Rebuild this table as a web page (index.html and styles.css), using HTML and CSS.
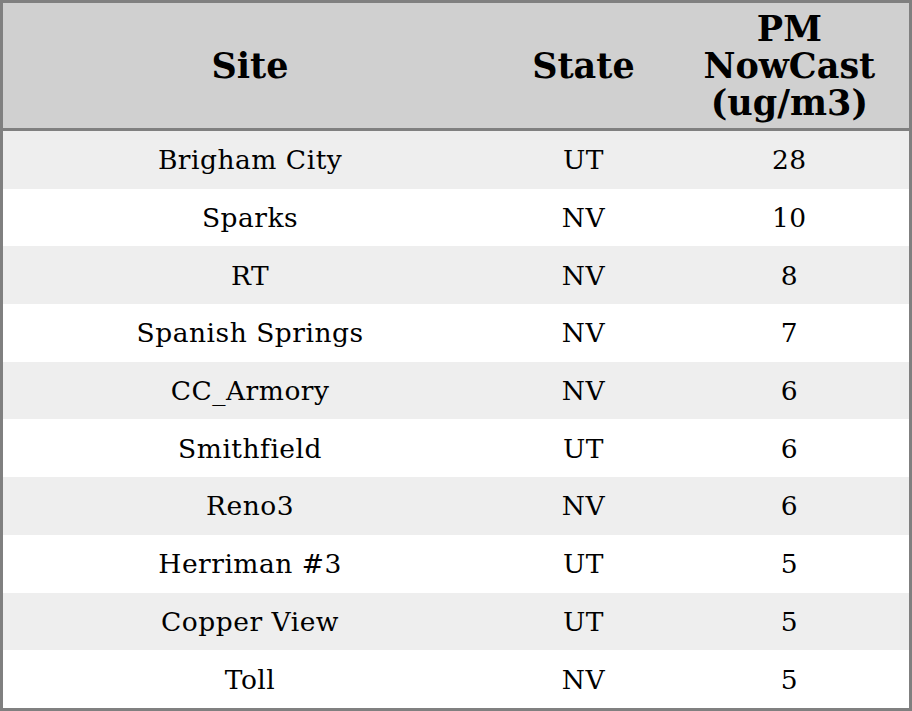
FILE: index.html
```html
<!DOCTYPE html>
<html>
<head>
<meta charset="utf-8">
<link rel="stylesheet" href="styles.css">
</head>
<body>
<table class="aq">
<colgroup><col class="c-site"><col class="c-state"><col class="c-pm"></colgroup>
<thead>
<tr><th>Site</th><th>State</th><th>PM<br>NowCast<br>(ug/m3)</th></tr>
</thead>
<tbody>
<tr><td>Brigham City</td><td>UT</td><td>28</td></tr>
<tr><td>Sparks</td><td>NV</td><td>10</td></tr>
<tr><td>RT</td><td>NV</td><td>8</td></tr>
<tr><td>Spanish Springs</td><td>NV</td><td>7</td></tr>
<tr><td>CC_Armory</td><td>NV</td><td>6</td></tr>
<tr><td>Smithfield</td><td>UT</td><td>6</td></tr>
<tr><td>Reno3</td><td>NV</td><td>6</td></tr>
<tr><td>Herriman #3</td><td>UT</td><td>5</td></tr>
<tr><td>Copper View</td><td>UT</td><td>5</td></tr>
<tr><td>Toll</td><td>NV</td><td>5</td></tr>
</tbody>
</table>
</body>
</html>
```
FILE: styles.css
```css
html, body { margin: 0; padding: 0; background: #fff; }
.aq {
  width: 912px;
  height: 711px;
  border-collapse: collapse;
  border: 3px solid #808080;
  font-family: "DejaVu Serif", serif;
  color: #000;
  table-layout: fixed;
}
.c-site { width: 494px; }
.c-state { width: 172px; }
.c-pm { width: 240px; }
.aq th {
  background: #d0d0d0;
  font-size: 35px;
  font-weight: bold;
  line-height: 37px;
  height: 125px;
  padding: 0;
  text-align: center;
  border-bottom: 3px solid #808080;
}
.aq td {
  font-size: 26.5px;
  letter-spacing: 0.5px;
  text-align: center;
  padding: 0;
  height: 57.7px;
}
.aq tbody tr:nth-child(odd) { background: #eeeeee; }
```
